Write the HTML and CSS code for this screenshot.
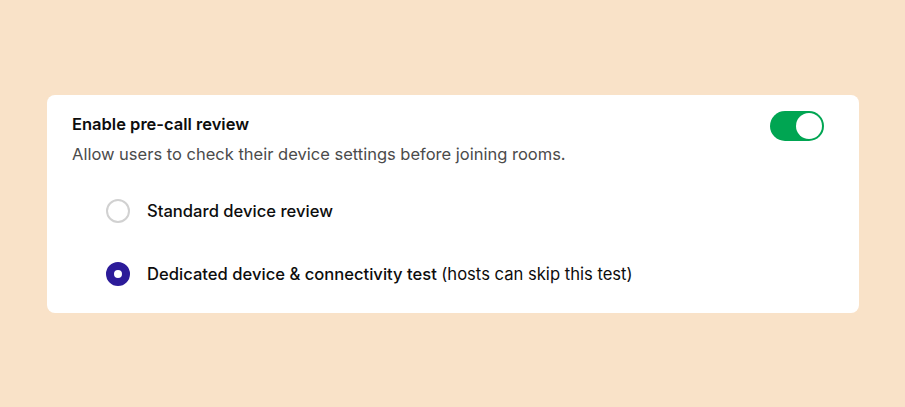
FILE: index.html
```html
<!DOCTYPE html>
<html lang="en">
<head>
    <meta charset="UTF-8">
    <title>Pre-call review</title>
    <link rel="stylesheet" href="styles.css">
</head>
<body>
    <div class="settings-card">
        <div class="card-header">
            <div class="header-text">
                <h2>Enable pre-call review</h2>
                <p>Allow users to check their device settings before joining rooms.</p>
            </div>
            <label class="toggle">
                <input type="checkbox" checked>
                <span class="track"><span class="knob"></span></span>
            </label>
        </div>

        <div class="options">
            <label class="option">
                <input type="radio" name="review_mode" value="standard">
                <span class="radio"></span>
                <span class="option-label">Standard device review</span>
            </label>
            <label class="option">
                <input type="radio" name="review_mode" value="dedicated" checked>
                <span class="radio"></span>
                <span class="option-label">Dedicated device &amp; connectivity test <span class="hint">(hosts can skip this test)</span></span>
            </label>
        </div>
    </div>
</body>
</html>
```

FILE: styles.css
```css
body {
    margin: 0;
    font-family: Inter, "Noto Sans", sans-serif;
    background-color: #f9e2c8;
    padding: 95px 46px 0 47px;
    color: #0d0d0d;
}

.settings-card {
    background: #fff;
    border-radius: 8px;
    padding: 17px 35px 8px 25px;
}

.card-header {
    display: flex;
    justify-content: space-between;
    align-items: flex-start;
}

h2 {
    margin: 0;
    font-size: 16.5px;
    font-weight: 600;
    line-height: 24px;
    color: #0d0d0d;
}

.header-text p {
    margin: 6px 0 0;
    font-size: 16.5px;
    line-height: 24px;
    color: #4b4b4b;
}

.toggle {
    margin-top: -1px;
    cursor: pointer;
}

.toggle input,
.option input {
    display: none;
}

.track {
    display: flex;
    justify-content: flex-end;
    align-items: center;
    width: 54px;
    height: 30px;
    box-sizing: border-box;
    padding: 2px;
    border-radius: 15px;
    background-color: #00a552;
}

.knob {
    width: 26px;
    height: 26px;
    border-radius: 50%;
    background: #fff;
}

.options {
    padding: 13px 0 0 34px;
}

.option {
    display: flex;
    align-items: center;
    gap: 17px;
    height: 63px;
    cursor: pointer;
}

.radio {
    width: 24px;
    height: 24px;
    box-sizing: border-box;
    border-radius: 50%;
    border: 2px solid #d1d1d1;
    background: #fff;
}

.option input:checked + .radio {
    border: 8px solid #2c1b99;
    background: #fff;
}

.option-label {
    font-size: 16.6px;
    font-weight: 500;
    color: #0d0d0d;
}

.hint {
    font-weight: 400;
}
```
